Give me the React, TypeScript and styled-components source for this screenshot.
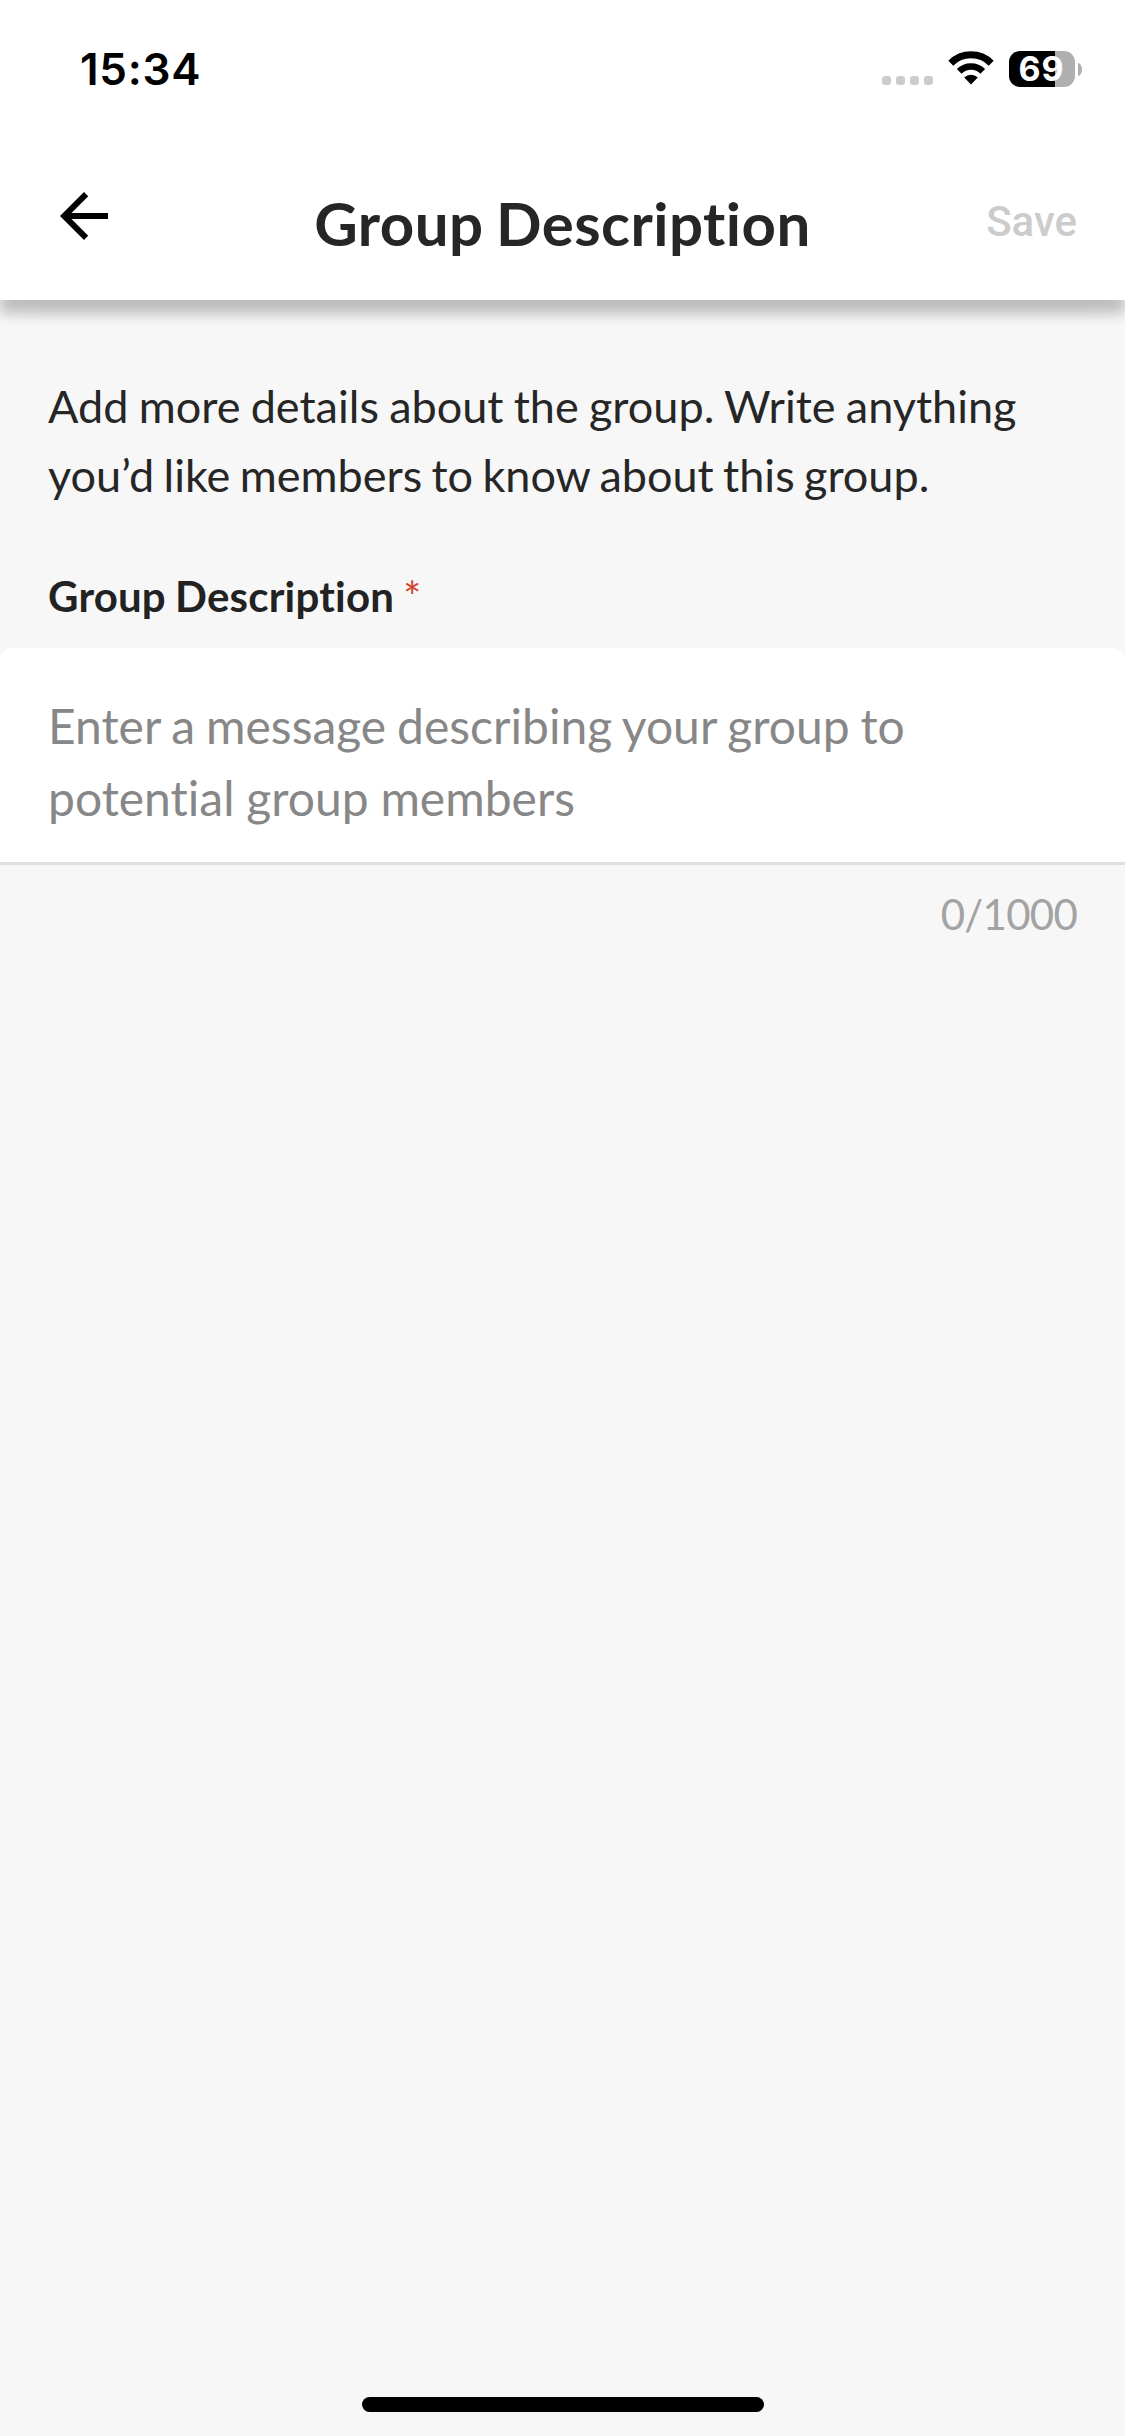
import React from "react";
import styled, { createGlobalStyle } from "styled-components";

const GlobalStyle = createGlobalStyle`
  * { box-sizing: border-box; }
  body { margin: 0; background: #f7f7f7; }
`;

const Screen = styled.div`
  display: flex;
  flex-direction: column;
  width: 1125px;
  height: 2436px;
  background: #f7f7f7;
  color: #262626;
  font-family: Lato, "Open Sans", sans-serif;
  font-variant-ligatures: none;
  overflow: hidden;
`;

const Header = styled.header`
  display: flex;
  flex-direction: column;
  height: 300px;
  background: #fff;
  box-shadow: 0 14px 12px rgba(0, 0, 0, 0.21), 0 3px 30px rgba(0, 0, 0, 0.05);
`;

const StatusBar = styled.div`
  display: flex;
  justify-content: space-between;
  height: 132px;
  padding: 42px 43px 0 80px;
`;

const Clock = styled.time`
  font: 600 44px/54px Inter, "Liberation Sans", sans-serif;
  letter-spacing: 0.75px;
  color: #000;
`;

const Indicators = styled.div`
  display: flex;
  align-items: flex-start;
  padding-top: 9px;
`;

const SignalDots = styled.div`
  display: flex;
  gap: 5px;
  margin: 25px 15px 0 0;
`;

const Dot = styled.span`
  width: 9px;
  height: 9px;
  border-radius: 3px;
  background: #ccc;
`;

const WifiIcon = styled.svg`
  width: 46px;
  height: 34px;
  margin-right: 15px;
`;

const Battery = styled.div`
  display: flex;
  align-items: center;
  gap: 3px;
`;

const BatteryBody = styled.div<{ $level: number }>`
  width: 66px;
  height: 36px;
  padding-right: 1px;
  border-radius: 11px;
  background: linear-gradient(to right, #000 ${(p) => p.$level}%, #b0b0b0 ${(p) => p.$level}%);
  color: #fff;
  font: 700 34px/36px Inter, "Liberation Sans", sans-serif;
  letter-spacing: 0.8px;
  text-align: center;
`;

const BatteryCap = styled.span`
  width: 4px;
  height: 13px;
  border-radius: 0 4px 4px 0 / 0 6.5px 6.5px 0;
  background: #b0b0b0;
`;

const NavBar = styled.div`
  display: grid;
  grid-template-columns: 1fr auto 1fr;
  align-items: start;
  height: 168px;
  padding: 48px 48px 0;
`;

const BackButton = styled.button`
  width: 72px;
  height: 72px;
  padding: 0;
  border: 0;
  background: none;
`;

const BackIcon = styled.svg`
  display: block;
  width: 72px;
  height: 72px;
`;

const Title = styled.h1`
  margin: 7px 0 0;
  font-size: 60px;
  line-height: 72px;
  font-weight: 700;
  letter-spacing: 0.45px;
  word-spacing: -2.5px;
`;

const SaveButton = styled.button`
  justify-self: end;
  margin-top: 17px;
  padding: 0;
  border: 0;
  background: none;
  color: #ccc;
  font: 500 42px/50px Roboto, sans-serif;
`;

const Content = styled.main`
  display: flex;
  flex-direction: column;
  flex: 1;
  padding-top: 72px;
`;

const Line = styled.span<{ $wordGap: number }>`
  display: block;
  white-space: nowrap;
  word-spacing: ${(p) => p.$wordGap}px;
`;

const Intro = styled.p`
  margin: 0;
  padding: 0 48px;
  font-size: 45px;
  line-height: 69px;
`;

const FieldLabel = styled.label`
  margin-top: 61px;
  padding: 0 48px;
  color: #222;
  font-size: 42px;
  line-height: 51px;
  font-weight: 700;
  letter-spacing: 0.2px;
  word-spacing: -1.2px;
`;

const Required = styled.span`
  color: #d0442e;
  font-weight: 400;
`;

const Field = styled.div`
  height: 217px;
  margin-top: 26px;
  padding: 42px 48px 0;
  border-bottom: 3px solid #e0e0e0;
  border-radius: 12px 12px 0 0;
  background: #fff;
`;

const Placeholder = styled.p`
  margin: 0;
  color: #878787;
  font-size: 48px;
  line-height: 72px;
`;

const Counter = styled.div`
  margin-top: 24px;
  padding: 0 48px;
  color: #a3a3a3;
  font-size: 42px;
  line-height: 51px;
  letter-spacing: -0.75px;
  text-align: right;
`;

const HomeIndicator = styled.div`
  align-self: center;
  width: 402px;
  height: 15px;
  margin-bottom: 24px;
  border-radius: 8px;
  background: #000;
`;

export default function App() {
  return (
    <>
      <GlobalStyle />
      <Screen>
        <Header>
          <StatusBar>
            <Clock>15:34</Clock>
            <Indicators>
              <SignalDots>
                <Dot />
                <Dot />
                <Dot />
                <Dot />
              </SignalDots>
              <WifiIcon viewBox="0 0 46 34" fill="none" stroke="#000">
                <path d="M2.8 12.2a28.6 28.6 0 0 1 40.4 0" strokeWidth="7" />
                <path d="M11.2 20.4a16.7 16.7 0 0 1 23.6 0" strokeWidth="6.6" />
                <path d="M16.2 26.6a9.6 9.6 0 0 1 13.6 0L23 33.6z" fill="#000" stroke="none" />
              </WifiIcon>
              <Battery>
                <BatteryBody $level={69}>69</BatteryBody>
                <BatteryCap />
              </Battery>
            </Indicators>
          </StatusBar>
          <NavBar>
            <BackButton aria-label="Back">
              <BackIcon viewBox="0 0 24 24" fill="#000">
                <path d="M20 11H7.83l5.59-5.59L12 4l-8 8 8 8 1.41-1.41L7.83 13H20v-2z" />
              </BackIcon>
            </BackButton>
            <Title>Group Description</Title>
            <SaveButton>Save</SaveButton>
          </NavBar>
        </Header>
        <Content>
          <Intro>
            <Line $wordGap={-1.25}>Add more details about the group. Write anything</Line>
            <Line $wordGap={-2.15}>you’d like members to know about this group.</Line>
          </Intro>
          <FieldLabel>
            Group Description <Required>*</Required>
          </FieldLabel>
          <Field>
            <Placeholder>
              <Line $wordGap={-1.4}>Enter a message describing your group to</Line>
              <Line $wordGap={-0.5}>potential group members</Line>
            </Placeholder>
          </Field>
          <Counter>0/1000</Counter>
        </Content>
        <HomeIndicator />
      </Screen>
    </>
  );
}
